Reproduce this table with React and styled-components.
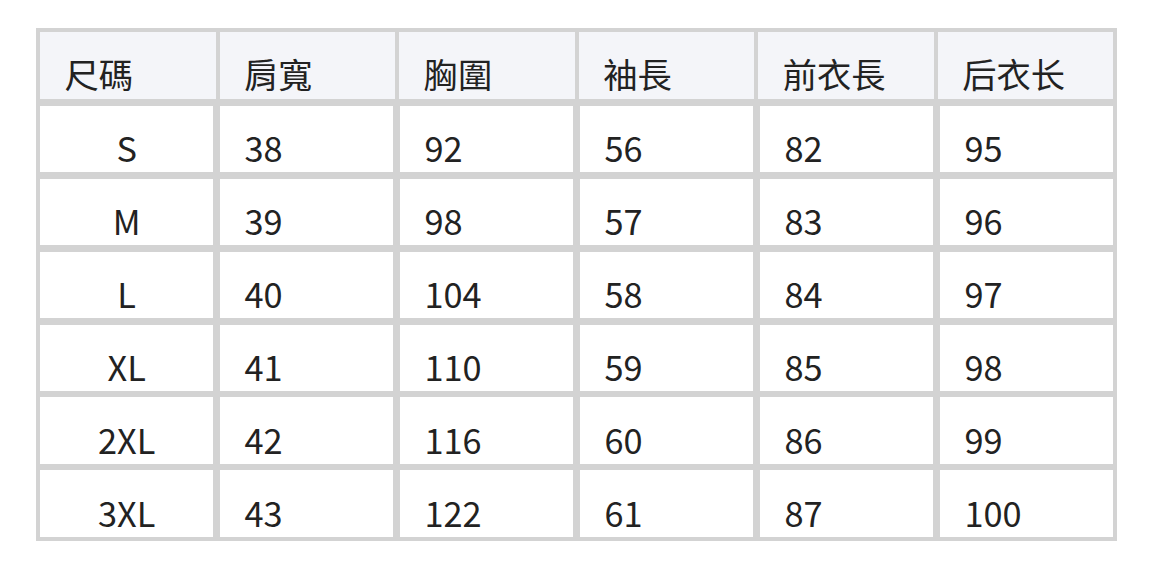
import styled, { createGlobalStyle } from 'styled-components'

const GlobalStyle = createGlobalStyle`
  html, body {
    margin: 0;
    padding: 0;
    background: #fff;
  }
  body {
    font-family: "Noto Sans CJK TC", "Noto Sans", sans-serif;
    color: #222;
  }
`

const Page = styled.div`
  padding: 28.3px 0 0 36px;
`

const Table = styled.div`
  width: 1081.3px;
  box-sizing: border-box;
  background: #d3d3d3;
  padding: 4px;
  display: flex;
  flex-direction: column;
  gap: 6.67px;
`

const Row = styled.div`
  display: grid;
  grid-template-columns: repeat(6, 1fr);
  gap: ${(p) => (p.$head ? '4px' : '6.67px')};
  height: ${(p) => (p.$head ? '66.7px' : '66.3px')};
`

const Cell = styled.div`
  display: flex;
  align-items: flex-end;
  justify-content: ${(p) => (p.$center ? 'center' : 'flex-start')};
  padding: ${(p) => (p.$center ? '0' : '0 0 0 24.5px')};
  padding-bottom: ${(p) => (p.$head ? '1px' : '0')};
  background: ${(p) => (p.$head ? '#f4f5f9' : '#fff')};
  font-size: 34.3px;
  line-height: 1.46;
  white-space: nowrap;
  overflow: hidden;
`

const headers = ['尺碼', '肩寬', '胸圍', '袖長', '前衣長', '后衣长']

const rows = [
  ['S', 38, 92, 56, 82, 95],
  ['M', 39, 98, 57, 83, 96],
  ['L', 40, 104, 58, 84, 97],
  ['XL', 41, 110, 59, 85, 98],
  ['2XL', 42, 116, 60, 86, 99],
  ['3XL', 43, 122, 61, 87, 100],
]

const App = () => {
  return (
    <Page>
      <GlobalStyle />
      <Table>
        <Row $head>
          {headers.map((h) => (
            <Cell $head key={h}>{h}</Cell>
          ))}
        </Row>
        {rows.map((r) => (
          <Row key={r[0]}>
            {r.map((v, i) => (
              <Cell key={i} $center={i === 0}>{v}</Cell>
            ))}
          </Row>
        ))}
      </Table>
    </Page>
  )
}

export default App
